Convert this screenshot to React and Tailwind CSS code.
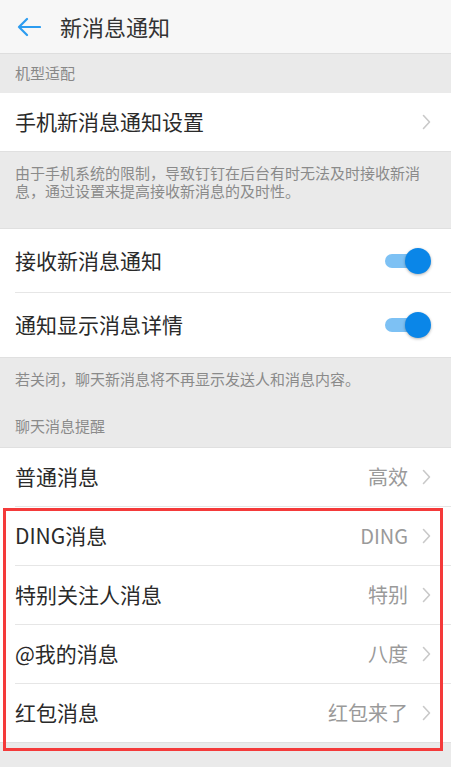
import React from "react";

const font = { fontFamily: '"Noto Sans CJK SC", Roboto, "Noto Sans", sans-serif' };

const Chevron = () => (
    <svg width="9" height="16" viewBox="0 0 9 16" className="shrink-0">
        <path d="M1.5 1.5 L7.5 8 L1.5 14.5" fill="none" stroke="#c9c9c9" strokeWidth="1.6" strokeLinecap="round" strokeLinejoin="round" />
    </svg>
);

const Toggle = () => (
    <div className="relative w-[46px] h-[26px] shrink-0">
        <div className="absolute left-0 top-[6px] w-[34px] h-[14px] rounded-full bg-[#7dc1f4]" />
        <div className="absolute right-0 top-0 w-[26px] h-[26px] rounded-full bg-[#0a86e8] shadow-[0_1px_3px_rgba(0,0,0,0.3)]" />
    </div>
);

const LinkRow = ({ title, value, last }) => (
    <div className="bg-white pl-[15px]">
        <div className={`flex items-center pr-[20px] ${last ? "h-[58px]" : "h-[59px] border-b border-[#e6e6e6]"}`}>
            <span className="flex-1 text-[21px] text-[#2a2a2a]">{title}</span>
            {value && <span className="text-[20px] text-[#9a9a9a] mr-[14px]">{value}</span>}
            <Chevron />
        </div>
    </div>
);

const ToggleRow = ({ title, last }) => (
    <div className="bg-white pl-[15px]">
        <div className={`h-[64px] flex items-center pr-[20px] ${last ? "" : "border-b border-[#e6e6e6]"}`}>
            <span className="flex-1 text-[21px] text-[#2a2a2a]">{title}</span>
            <Toggle />
        </div>
    </div>
);

export default function App() {
    return (
        <div className="w-[451px] h-[767px] bg-[#eaeaea] overflow-hidden" style={font}>
            {/* header */}
            <div className="h-[54px] bg-[#f7f7f7] border-b border-[#dedede] flex items-center">
                <svg width="24" height="20" viewBox="0 0 24 20" className="ml-[17px]">
                    <path d="M23 10 H2 M10 2 L2 10 L10 18" fill="none" stroke="#2c9cf0" strokeWidth="2.2" strokeLinecap="round" strokeLinejoin="round" />
                </svg>
                <span className="ml-[19px] text-[22px] text-[#333]">新消息通知</span>
            </div>

            <div className="h-[39px] flex items-center px-[15px] text-[15px] text-[#888]">机型适配</div>
            <div className="border-b border-[#e0e0e0]">
                <LinkRow title="手机新消息通知设置" last />
            </div>
            <div className="h-[76px] px-[15px] pt-[12px] text-[15px] leading-[18px] text-[#8a8a8a]">
                <p className="max-w-[420px]">由于手机系统的限制，导致钉钉在后台有时无法及时接收新消息，通过设置来提高接收新消息的及时性。</p>
            </div>

            <div className="border-t border-[#e0e0e0]">
                <ToggleRow title="接收新消息通知" />
                <ToggleRow title="通知显示消息详情" last />
            </div>

            <div className="h-[91px] border-t border-b border-[#e0e0e0] px-[15px] text-[15px] text-[#8a8a8a] flex flex-col">
                <div className="pt-[12px] leading-[18px]">若关闭，聊天新消息将不再显示发送人和消息内容。</div>
                <div className="mt-[29px] leading-[18px]">聊天消息提醒</div>
            </div>

            <div className="border-b border-[#e0e0e0]">
                <LinkRow title="普通消息" value="高效" />
                <div className="relative">
                    <LinkRow title="DING消息" value="DING" />
                    <LinkRow title="特别关注人消息" value="特别" />
                    <LinkRow title="@我的消息" value="八度" />
                    <LinkRow title="红包消息" value="红包来了" last />
                    <div className="absolute left-[3px] top-[1px] w-[440px] h-[243px] border-[3px] border-[#f43a3a]" />
                </div>
            </div>
        </div>
    );
}
